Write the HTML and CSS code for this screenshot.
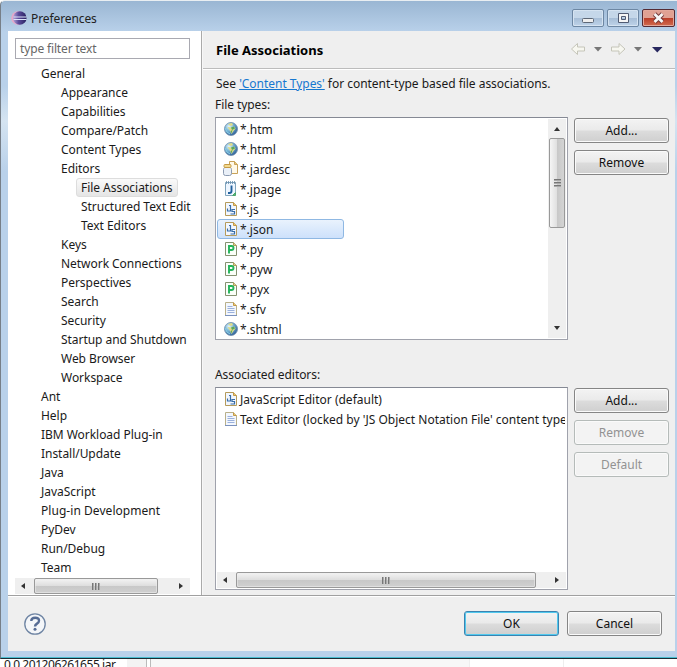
FILE: index.html
```html
<!DOCTYPE html>
<html lang="en">
<head>
<meta charset="utf-8">
<title>Preferences</title>
<link rel="stylesheet" href="styles.css">
</head>
<body>
<svg class="defs" width="0" height="0">
  <defs>
    <linearGradient id="ball" x1="0" y1="0" x2="1" y2="0"><stop offset="0" stop-color="#b9a5d8"/><stop offset=".4" stop-color="#5b4c9c"/><stop offset="1" stop-color="#28205f"/></linearGradient>
    <radialGradient id="sea" cx=".35" cy=".3" r=".75"><stop offset="0" stop-color="#e4f6fc"/><stop offset=".45" stop-color="#78b4d6"/><stop offset="1" stop-color="#2c5c94"/></radialGradient>
  </defs>
  <symbol id="globe" viewBox="0 0 16 16">
    <circle cx="8" cy="8" r="6.500" fill="url(#sea)" stroke="#6b8cab" stroke-width=".8"/>
    <path d="M5 3l4-1 1 2-2 1-2-1zM4.500 6l3.500 .5 3-1 1.500 2-2 2.500-2 3-2-4z" fill="#e0dc88"/>
    <path d="M8 6.500l3-1 1 2-3 1.500zM7.500 10l2-1-1 3.500z" fill="#5aa65c"/>
    <path d="M2 7l2 4 3 2" fill="none" stroke="#8bd0e6"/>
  </symbol>
  <symbol id="page" viewBox="0 0 16 16">
    <path d="M2.500 1.500h8l3 3v10h-11z" fill="#f3f7fe" stroke="#b9b08a"/>
    <path d="M10.500 1.500v3h3" fill="#e9c77b" stroke="#c49a45"/>
  </symbol>
  <symbol id="text" viewBox="0 0 16 16">
    <use href="#page"/><path d="M4.500 5.500h5M4.500 7.500h7M4.500 9.500h7M4.500 11.500h7" stroke="#9bb1dc"/>
    <path d="M2 14.500h12" stroke="#7a91bd"/>
  </symbol>
  <symbol id="js" viewBox="0 0 16 16">
    <path d="M2.500 1.500h8l3 3v10h-11z" fill="#f2f7ff" stroke="#b59b5b"/>
    <path d="M10.500 1.500v3h3" fill="#e9c77b" stroke="#c49a45"/>
    <path d="M4.500 7.500v2.500h3v-5.500h-1.500M12 8.500h-3v2h2.500v2.500h-4" fill="none" stroke="#376da9" stroke-width="1.200"/>
  </symbol>
  <symbol id="py" viewBox="0 0 16 16">
    <path d="M2.500 1.500h8l3 3v10h-11z" fill="#fafff8" stroke="#859171"/>
    <path d="M10.500 1.500v3h3" fill="#e3cf91" stroke="#b4a05a"/>
    <path d="M6 12.500v-7.500h2.500q2 0 2 2t-2 2h-2.500" fill="none" stroke="#24b35b" stroke-width="1.900"/>
  </symbol>
  <symbol id="jar" viewBox="0 0 16 16">
    <path d="M6.500 .5h5l3 3v9h-8z" fill="#fff9e9" stroke="#c8a259"/>
    <path d="M11.500 .5v3h3" fill="#e8c77c" stroke="#c8a259"/>
    <path d="M1.500 6.500q-1 1-1 2v4q0 2 2 2h4q2 0 2-2v-4q0-1-1-2z" fill="#eaf0f8" stroke="#8b9ab1"/>
    <rect x="1" y="3.500" width="7" height="3" rx="1" fill="#f3d98e" stroke="#c49a45"/>
  </symbol>
  <symbol id="jpage" viewBox="0 0 16 16">
    <path d="M2.500 1.500h10v10l-3 3h-7z" fill="#eef6ff" stroke="#81a5bd"/>
    <path d="M3.500 0v3M5.500 0v3M7.500 0v3M9.500 0v3M11.500 0v3" stroke="#668bab" stroke-width=".8"/>
    <path d="M8.500 4.500v5.500q0 2-2 2h-1.500" fill="none" stroke="#205f9c" stroke-width="1.900"/>
    <path d="M9.500 14.500l3-3v3z" fill="#58b879" stroke="#4ba569"/>
  </symbol>
</svg>
<div class="window">
  <header class="titlebar">
    <svg class="logo" viewBox="0 0 16 16"><circle cx="7" cy="8" r="6.800" fill="#e7a8c8"/><circle cx="8.800" cy="8" r="6.800" fill="url(#ball)"/><path d="M2.500 7h13M2.500 9.500h13" stroke="#dbe3fa"/></svg>
    <span class="title">Preferences</span>
    <div class="controls">
      <span class="control"><svg viewBox="0 0 30 16"><rect x="9.500" y="8.500" width="11" height="4" rx="1" fill="#eee" stroke="#5d6776"/></svg></span>
      <span class="control"><svg viewBox="0 0 30 16"><path d="M10.500 3.500h10v9h-10zM13.500 6.500v3h4v-3z" fill="#f5f5f5" fill-rule="evenodd" stroke="#505b73"/></svg></span>
      <span class="control close"><svg viewBox="0 0 31 16"><path d="M11.500 4l8 8m0-8l-8 8" stroke="#733a3a" stroke-width="4.600"/><path d="M11.500 4l8 8m0-8l-8 8" stroke="#f7f7f7" stroke-width="2.800"/></svg></span>
    </div>
  </header>
  <div class="body">
    <div class="columns">
      <aside class="sidebar">
        <div class="filter">type filter text</div>
        <ul class="tree">
          <li>General</li>
          <li class="l2">Appearance</li>
          <li class="l2">Capabilities</li>
          <li class="l2">Compare/Patch</li>
          <li class="l2">Content Types</li>
          <li class="l2">Editors</li>
          <li class="l3"><span class="current">File Associations</span></li>
          <li class="l3">Structured Text Edit</li>
          <li class="l3">Text Editors</li>
          <li class="l2">Keys</li>
          <li class="l2">Network Connections</li>
          <li class="l2">Perspectives</li>
          <li class="l2">Search</li>
          <li class="l2">Security</li>
          <li class="l2">Startup and Shutdown</li>
          <li class="l2">Web Browser</li>
          <li class="l2">Workspace</li>
          <li>Ant</li>
          <li>Help</li>
          <li>IBM Workload Plug-in</li>
          <li>Install/Update</li>
          <li>Java</li>
          <li>JavaScript</li>
          <li class="wide">Plug-in Development</li>
          <li>PyDev</li>
          <li>Run/Debug</li>
          <li>Team</li>
        </ul>
        <div class="hscroll"><i class="arrow left"></i><span class="thumb tree-thumb"><i class="grip"></i></span><i class="arrow right"></i></div>
      </aside>
      <main class="main">
        <div class="heading">
          <h1>File Associations</h1>
          <svg class="nav" viewBox="0 0 96 16">
            <path d="M1.500 8l6-5.500v3.500h7v4h-7v3.500z" fill="#f7f7f0" stroke="#c5c5b9"/>
            <path d="M24 6h8l-4 4.500z" fill="#777"/>
            <path d="M55 8l-6-5.500v3.500h-7.500v4h7.500v3.500z" fill="#f7f7f0" stroke="#c5c5b9"/>
            <path d="M64 6h8l-4 4.500z" fill="#777"/>
            <path d="M82 6h10.500l-5.200 5.500z" fill="#28285f"/>
          </svg>
        </div>
        <div class="content">
          <p class="intro">See <a>'Content Types'</a> for content-type based file associations.</p>
          <p class="label">File types:</p>
          <div class="section">
            <div class="list types">
              <ul>
                <li><svg><use href="#globe"/></svg>*.htm</li>
                <li><svg><use href="#globe"/></svg>*.html</li>
                <li><svg><use href="#jar"/></svg>*.jardesc</li>
                <li><svg><use href="#jpage"/></svg>*.jpage</li>
                <li><svg><use href="#js"/></svg>*.js</li>
                <li class="selected"><svg><use href="#js"/></svg>*.json</li>
                <li><svg><use href="#py"/></svg>*.py</li>
                <li><svg><use href="#py"/></svg>*.pyw</li>
                <li><svg><use href="#py"/></svg>*.pyx</li>
                <li><svg><use href="#text"/></svg>*.sfv</li>
                <li><svg><use href="#globe"/></svg>*.shtml</li>
              </ul>
              <div class="vscroll"><i class="arrow up"></i><span class="vthumb"><i class="vgrip"></i></span><i class="arrow down"></i></div>
            </div>
            <div class="actions"><button>Add...</button><button>Remove</button></div>
          </div>
          <p class="label second">Associated editors:</p>
          <div class="section">
            <div class="list editors">
              <ul>
                <li><svg><use href="#js"/></svg>JavaScript Editor (default)</li>
                <li><svg><use href="#text"/></svg>Text Editor (locked by 'JS Object Notation File' content type)</li>
              </ul>
              <div class="hscroll"><i class="arrow left"></i><span class="thumb editor-thumb"><i class="grip"></i></span><i class="arrow right"></i></div>
            </div>
            <div class="actions"><button>Add...</button><button disabled>Remove</button><button disabled>Default</button></div>
          </div>
        </div>
      </main>
    </div>
    <footer class="footer">
      <svg class="help" viewBox="0 0 24 24"><circle cx="12" cy="12" r="10.200" fill="#f4f6f9" stroke="#6e84a3" stroke-width="1.300"/><path d="M8.300 9q0-3.300 3.900-3.300t3.800 3q0 1.700-2 2.900t-2 2.900" fill="none" stroke="#566c94" stroke-width="2.400"/><circle cx="12" cy="17.300" r="1.500" fill="#566c94"/></svg>
      <button class="primary">OK</button><button>Cancel</button>
    </footer>
  </div>
</div>
<div class="behind"><span class="file">0.0.201206261655.jar</span><span class="gap"></span><span class="cell"></span><span class="cell2"></span><span class="cell3"></span></div>
</body>
</html>
```
FILE: styles.css
```css
* { box-sizing: border-box; }
body { margin: 0; width: 677px; height: 667px; overflow: hidden; background: #fff; font: 12px/19px "Noto Sans", sans-serif; color: #1a1a1a; }
.defs { position: absolute; }
p, ul, h1 { margin: 0; padding: 0; }
ul { list-style: none; }
.window { height: 659px; padding: 0 2px 6px 7px; border-left: 1px solid #777f88; border-top: 1px solid #e9eef2; border-bottom: 1px solid #1b2c34; border-radius: 5px 0 0 0; background: linear-gradient(#9ab6d3, #b9d1ea 31px, #b9d1ea 85px, #d5e4f1 120px, #b9d1ea 170px); box-shadow: inset 0 -1px #49bdd0; }
.titlebar { height: 30px; display: flex; align-items: center; padding: 4px 1px 0 3px; margin-right: -1px; }
.logo { width: 16px; height: 16px; }
.title { margin-left: 4px; flex: 1; color: #222; letter-spacing: -.1px; }
.controls { display: flex; gap: 3px; }
.control { width: 32px; height: 18px; border: 1px solid #6d87a3; border-radius: 2px; background: linear-gradient(#c5d7e9 48%, #a6bdd6 50%, #bed3e9); box-shadow: inset 0 0 0 1px #d5e3f1; }
.control svg { display: block; width: 30px; height: 16px; }
.close { width: 33px; border-color: #542b34; background: linear-gradient(#e0a193 48%, #b93c27 50%, #d26c50); box-shadow: inset 0 0 0 1px #e3a89b; }
.close svg { width: 31px; }
.body { height: 620px; background: #efefef; display: flex; flex-direction: column; }
.columns { display: flex; height: 564px; }
.sidebar { width: 194px; background: #fff; border-right: 1px solid #aaa; padding: 7px 0 0 7px; flex: none; }
.filter { width: 175px; height: 21px; border: 1px solid #a9a9b1; padding-left: 4px; line-height: 19px; color: #666; letter-spacing: -.15px; }
.tree { margin-top: 5px; height: 514px; }
.tree li { height: 19px; padding-left: 26px; white-space: nowrap; letter-spacing: -.04px; }
.tree .wide { letter-spacing: .05px; }
.tree .l2 { padding-left: 46px; }
.tree .l3 { padding-left: 66px; }
.current { display: inline-block; height: 19px; line-height: 17px; margin-left: -5px; padding: 0 4px; border: 1px solid #ddd; border-radius: 3px; background: linear-gradient(#fafafa, #e5e5e5); }
.hscroll { height: 16px; display: flex; align-items: center; background: #efefef; }
.sidebar .hscroll { width: 175px; }
.arrow { width: 0; height: 0; border: 3px solid transparent; }
.left { border-right: 4px solid #333; border-left: 0; margin: 0 9px 0 6px; }
.right { border-left: 4px solid #333; border-right: 0; margin: 0 7px 0 auto; }
.up { border-bottom: 4px solid #333; border-top: 0; }
.down { border-top: 4px solid #333; border-bottom: 0; margin-top: auto; }
.thumb { height: 16px; display: flex; align-items: center; justify-content: center; border: 1px solid #999; border-radius: 2px; background: linear-gradient(#f3f3f3, #dedede 48%, #c8c8c8 52%, #d0d0d0); box-shadow: inset 0 0 0 1px #eee8; }
.tree-thumb { width: 124px; }
.editor-thumb { width: 300px; }
.grip { width: 8px; height: 7px; background: repeating-linear-gradient(90deg, #777 0 1px, #aaa 1px 2px, transparent 2px 3px); }
.main { flex: 1; min-width: 0; border-left: 1px solid #f7f7f7; }
.heading { height: 38px; display: flex; align-items: center; justify-content: space-between; padding: 1px 8px 0 13px; border-bottom: 1px solid #bcbcbc; box-shadow: 0 1px #fff; }
h1 { font-size: 13px; line-height: 20px; color: #000; }
.nav { width: 96px; height: 16px; margin-right: 1px; margin-top: -2px; }
.content { padding: 5px 6px 0 12px; }
.intro { height: 21px; line-height: 20px; letter-spacing: -.03px; padding-left: 1px; }
.intro a { color: #1778d0; text-decoration: underline; }
.label { height: 22px; line-height: 20px; letter-spacing: -.07px; }
.second { margin-top: 25px; height: 22px; line-height: 19px; }
.section { display: flex; gap: 6px; }
.list { width: 353px; border: 1px solid #a0a2ac; border-top-color: #858994; background: #fff; padding: 1px; display: flex; }
.types { height: 223px; }
.types ul { flex: 1; }
.list li { height: 20px; width: 127px; padding-left: 5px; display: flex; align-items: center; white-space: nowrap; border: 1px solid transparent; }
.list li svg { width: 16px; height: 16px; flex: none; margin-right: 1px; }
.selected { border-color: #8fb8e3 !important; border-radius: 3px; background: linear-gradient(#e9f2fd, #cde1fb); }
.vscroll { width: 18px; background: #efefef; display: flex; flex-direction: column; align-items: center; padding: 8px 0; }
.vthumb { width: 16px; height: 90px; margin-top: 7px; border: 1px solid #999; border-radius: 2px; background: linear-gradient(90deg, #f5f5f5, #e0e0e0 48%, #c8c8c8 52%, #d4d4d4); display: flex; align-items: center; justify-content: center; }
.vgrip { width: 7px; height: 8px; background: repeating-linear-gradient(#777 0 1px, #aaa 1px 2px, transparent 2px 3px); }
.editors { height: 203px; flex-direction: column; justify-content: space-between; }
.editors ul { overflow: hidden; margin-right: 1px; }
.actions { width: 95px; padding-top: 1px; display: flex; flex-direction: column; gap: 7px; }
button { width: 95px; height: 25px; padding: 0; font: inherit; line-height: 21px; color: #111; border: 1px solid #858585; border-radius: 3px; background: linear-gradient(#f3f3f3, #eaeaea 48%, #dcdcdc 52%, #cfcfcf); box-shadow: inset 0 0 0 1px #fafafa; }
button:disabled { color: #929292; border-color: #b5bbb9; background: #f3f3f3; }
.footer { flex: 1; border-top: 1px solid #a0a0a0; box-shadow: inset 0 1px #fff; display: flex; align-items: center; padding: 0 13px 0 15px; gap: 8px; }
.help { width: 24px; height: 24px; margin-right: auto; }
.primary { border-color: #3b83b0; box-shadow: inset 0 0 0 1px #51c9ee; }
.behind { height: 8px; display: flex; overflow: hidden; background: #fff; }
.file { width: 127px; padding-left: 4px; line-height: 12px; white-space: nowrap; letter-spacing: -.45px; }
.gap { width: 19px; background: #f3f3f3; }
.cell { width: 5px; border: solid #bbb; border-width: 0 1px; }
.cell2 { width: 318px; background: #f7f7f7; }
.cell3 { width: 95px; border: solid #eee; border-width: 0 1px; }
```
